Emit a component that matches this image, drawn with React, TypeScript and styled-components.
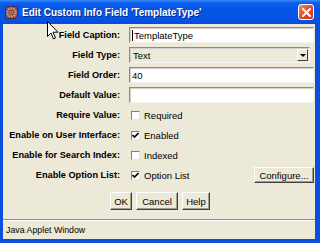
import { createGlobalStyle, styled } from "styled-components";

const GlobalStyle = createGlobalStyle`
  html, body {
    margin: 0;
    padding: 0;
    background: #ffffff;
  }
  body {
    font-family: "Liberation Sans", Arial, sans-serif;
  }
`;

const formRows = [
  { label: "Field Caption:", kind: "text", value: "TemplateType", caret: true },
  { label: "Field Type:", kind: "select", value: "Text" },
  { label: "Field Order:", kind: "text", value: "40" },
  { label: "Default Value:", kind: "text", value: "" },
  { label: "Require Value:", kind: "check", value: "Required", checked: false },
  { label: "Enable on User Interface:", kind: "check", value: "Enabled", checked: true },
  { label: "Enable for Search Index:", kind: "check", value: "Indexed", checked: false },
  { label: "Enable Option List:", kind: "check", value: "Option List", checked: true, extra: "Configure..." },
];

const AppIcon = () => (
  <svg width="13" height="13" viewBox="0 0 13 13">
    <rect x="0.5" y="0.5" width="12" height="12" rx="1" fill="#6a4a8a" stroke="#3c2a5a" />
    <circle cx="6.5" cy="6.5" r="4.2" fill="none" stroke="#f0a030" strokeWidth="2.2" strokeDasharray="1.6 1" />
    <circle cx="6.5" cy="6.5" r="2.2" fill="#c86418" />
  </svg>
);

const CloseIcon = () => (
  <svg width="9" height="9" viewBox="0 0 9 9">
    <path d="M1 1 L8 8 M8 1 L1 8" stroke="#ffffff" strokeWidth="2" strokeLinecap="square" />
  </svg>
);

const CheckMark = () => (
  <svg width="7" height="7" viewBox="0 0 7 7">
    <path d="M0.5 3 L2.5 5 L6.5 1" stroke="#000000" strokeWidth="1.6" fill="none" />
  </svg>
);

const Pointer = () => (
  <svg width="12" height="19" viewBox="0 0 12 19">
    <path d="M0.5 0.5 L0.5 15.5 L4 12 L6.5 18 L8.5 17 L6 11.2 L11 11.2 Z" fill="#ffffff" stroke="#000000" strokeWidth="1" strokeLinejoin="miter" />
  </svg>
);

const App = () => {
  return (
    <>
      <GlobalStyle />
      <Frame>
        <TitleBar>
          <AppIcon />
          <Title>Edit Custom Info Field 'TemplateType'</Title>
          <CloseButton>
            <CloseIcon />
          </CloseButton>
        </TitleBar>
        <Body>
          <Form>
            {formRows.map((row, index) => (
              <FormRow key={index}>
                <Label>{row.label}</Label>
                {row.kind === "text" && (
                  <TextField>
                    {row.caret && <Caret />}
                    {row.value}
                  </TextField>
                )}
                {row.kind === "select" && (
                  <SelectField>
                    {row.value}
                    <DropButton>
                      <Arrow />
                    </DropButton>
                  </SelectField>
                )}
                {row.kind === "check" && (
                  <CheckLine>
                    <CheckOption>
                      <CheckBox>{row.checked && <CheckMark />}</CheckBox>
                      {row.value}
                    </CheckOption>
                    {row.extra && <Button $w={60} $h={16}>{row.extra}</Button>}
                  </CheckLine>
                )}
              </FormRow>
            ))}
          </Form>
          <ButtonRow>
            <Button $w={22}>OK</Button>
            <Button $w={42}>Cancel</Button>
            <Button $w={28}>Help</Button>
          </ButtonRow>
          <StatusBar>Java Applet Window</StatusBar>
        </Body>
        <Cursor>
          <Pointer />
        </Cursor>
      </Frame>
    </>
  );
};

const Frame = styled.div`
  position: relative;
  width: 320px;
  height: 243px;
  display: flex;
  flex-direction: column;
  background: #0a4fe0;
  overflow: hidden;
`;

const TitleBar = styled.div`
  height: 24px;
  flex-shrink: 0;
  display: flex;
  align-items: center;
  padding: 0 6px 0 5px;
  background: linear-gradient(
    #3b8cf8 0%,
    #0a5ded 12%,
    #0454e6 45%,
    #0454e6 80%,
    #0a4ad8 100%
  );
`;

const Title = styled.div`
  flex: 1;
  margin-left: 4px;
  color: #ffffff;
  font-size: 10px;
  font-weight: bold;
  white-space: nowrap;
  text-shadow: 1px 1px 0 #0a2a8a;
`;

const CloseButton = styled.div`
  width: 14px;
  height: 14px;
  display: flex;
  align-items: center;
  justify-content: center;
  border: 1px solid #ffffff;
  border-radius: 3px;
  background: linear-gradient(135deg, #f09070 0%, #e0502c 45%, #c43a1a 100%);
`;

const Body = styled.div`
  flex: 1;
  display: flex;
  flex-direction: column;
  margin: 0 5px 4px 3px;
  background: #ece9d8;
`;

const Form = styled.div`
  display: flex;
  flex-direction: column;
  gap: 4px;
  padding-top: 3px;
`;

const FormRow = styled.div`
  display: grid;
  grid-template-columns: 117px 185px;
  column-gap: 9px;
  height: 16px;
  align-items: center;
`;

const Label = styled.div`
  text-align: right;
  font-size: 9.2px;
  font-weight: bold;
  color: #000000;
  white-space: nowrap;
`;

const TextField = styled.div`
  box-sizing: border-box;
  height: 16px;
  display: flex;
  align-items: center;
  padding-left: 2px;
  font-size: 9.5px;
  color: #000000;
  background: #ffffff;
  border: 1px solid;
  border-color: #8c8a84 #f4f3ee #f4f3ee #8c8a84;
  box-shadow: inset 1px 1px 0 #d4d0c8;
`;

const Caret = styled.span`
  width: 1px;
  height: 11px;
  margin-right: 1px;
  background: #000000;
`;

const SelectField = styled(TextField)`
  margin-right: 4px;
  padding-left: 3px;
  justify-content: space-between;
  background: #ece9d8;
`;

const DropButton = styled.div`
  box-sizing: border-box;
  width: 11px;
  height: 12px;
  display: flex;
  align-items: center;
  justify-content: center;
  margin-right: 1px;
  background: #ece9d8;
  border: 1px solid;
  border-color: #ffffff #404040 #404040 #ffffff;
`;

const Arrow = styled.div`
  width: 0;
  height: 0;
  border-left: 3px solid transparent;
  border-right: 3px solid transparent;
  border-top: 3px solid #000000;
`;

const CheckLine = styled.div`
  display: flex;
  align-items: center;
  justify-content: space-between;
  padding-left: 2px;
`;

const CheckOption = styled.div`
  display: flex;
  align-items: center;
  gap: 4px;
  font-size: 9.5px;
  color: #000000;
`;

const CheckBox = styled.div`
  box-sizing: border-box;
  width: 9px;
  height: 9px;
  display: flex;
  align-items: center;
  justify-content: center;
  background: #ffffff;
  border: 1px solid;
  border-color: #808080 #e8e6de #e8e6de #808080;
`;

const Button = styled.div<{ $w: number; $h?: number }>`
  box-sizing: border-box;
  width: ${(p) => p.$w}px;
  height: ${(p) => p.$h ?? 18}px;
  display: flex;
  align-items: center;
  justify-content: center;
  font-size: 9.5px;
  color: #000000;
  background: #ece9d8;
  border: 1px solid;
  border-color: #ffffff #404040 #404040 #ffffff;
  box-shadow: inset -1px -1px 0 #a09c90;
`;

const ButtonRow = styled.div`
  display: flex;
  justify-content: center;
  gap: 4px;
  margin-top: 9px;
  padding-left: 2px;
`;

const StatusBar = styled.div`
  margin-top: auto;
  height: 20px;
  box-sizing: border-box;
  display: flex;
  align-items: center;
  padding-left: 3px;
  font-size: 8.8px;
  color: #000000;
  border-top: 1px solid #8c8a84;
  box-shadow: inset 0 1px 0 #ffffff;
`;

const Cursor = styled.div`
  position: absolute;
  left: 47px;
  top: 21px;
  line-height: 0;
`;

export default App;
